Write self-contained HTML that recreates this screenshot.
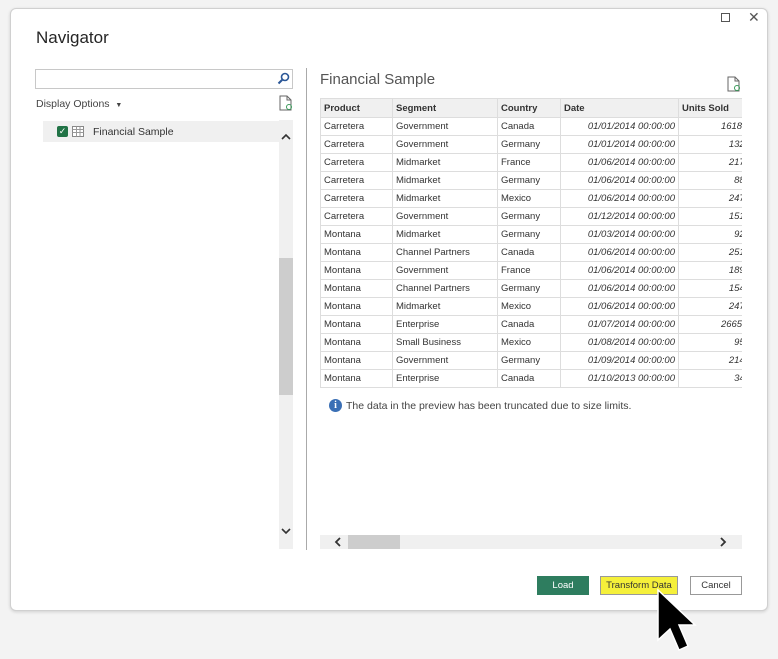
<!DOCTYPE html><html><head><style>
*{margin:0;padding:0;box-sizing:border-box}
body{width:778px;height:659px;background:#f3f3f3;font-family:"Liberation Sans",sans-serif;position:relative;overflow:hidden}
.dlg{position:absolute;left:10px;top:8px;width:758px;height:603px;background:#fff;border:1px solid #d0d0d0;border-radius:6px;box-shadow:0 1px 3px rgba(0,0,0,.15)}
.a{position:absolute}
table{border-collapse:collapse;font-size:9.5px;color:#333;table-layout:fixed}
td,th{border:1px solid #ddd;height:18px;padding:0 3px;white-space:nowrap;overflow:hidden;text-align:left}
th{background:#f0f0f0;font-weight:bold;height:19px}
td.d{font-style:italic;text-align:right}
td.u{font-style:italic;text-align:right;padding-right:0}
.btn{position:absolute;top:576px;height:19px;font-size:9.5px;text-align:center;line-height:17px;border:1px solid #999}
.chev{position:absolute;font-size:13px;color:#333;font-weight:bold}
</style></head><body>
<div class="dlg"></div>
<div class="a" style="left:36px;top:28px;font-size:17px;color:#252525">Navigator</div>
<div class="a" style="left:721px;top:13px;width:9px;height:9px;border:1px solid #555"></div>
<div class="a" style="left:748px;top:9px;font-size:14px;color:#555">✕</div>
<div class="a" style="left:35px;top:69px;width:258px;height:20px;border:1px solid #c8c8c8"></div>
<svg class="a" style="left:277px;top:72px" width="13" height="13"><circle cx="8" cy="5" r="3.5" fill="none" stroke="#2b5797" stroke-width="1.6"/><line x1="5.5" y1="7.5" x2="1.5" y2="11.5" stroke="#2b5797" stroke-width="2"/></svg>
<div class="a" style="left:36px;top:98px;font-size:10.5px;color:#444">Display Options&nbsp;&nbsp;<span style="font-size:7px">▼</span></div>
<svg class="a" style="left:279px;top:95px" width="14" height="16"><path d="M1 1h7l4 4v10H1z" fill="#fff" stroke="#666"/><path d="M8 1v4h4" fill="none" stroke="#666"/><circle cx="10" cy="12" r="2.5" fill="none" stroke="#3a9a5a"/></svg>
<div class="a" style="left:43px;top:121px;width:236px;height:21px;background:#f0f0f0"></div>
<div class="a" style="left:57px;top:126px;width:11px;height:11px;background:#217346;border-radius:2px;color:#fff;font-size:9px;line-height:11px;text-align:center">✓</div>
<svg class="a" style="left:72px;top:126px" width="12" height="11"><rect x=".5" y=".5" width="11" height="10" fill="#fff" stroke="#888"/><path d="M.5 3.5h11M.5 6.5h11M4.5 .5v10M8 .5v10" stroke="#999"/></svg>
<div class="a" style="left:93px;top:126px;font-size:10.5px;color:#333">Financial Sample</div>
<div class="a" style="left:279px;top:120px;width:14px;height:429px;background:#f0f0f0"></div>
<div class="a" style="left:279px;top:258px;width:14px;height:137px;background:#cdcdcd"></div>
<svg class="a" style="left:281px;top:133px" width="10" height="7"><path d="M1 6L5 2L9 6" fill="none" stroke="#333" stroke-width="1.6"/></svg>
<svg class="a" style="left:281px;top:528px" width="10" height="7"><path d="M1 1L5 5L9 1" fill="none" stroke="#333" stroke-width="1.6"/></svg>
<div class="a" style="left:306px;top:68px;width:1px;height:482px;background:#aaa"></div>
<div class="a" style="left:320px;top:71px;font-size:15px;color:#555">Financial Sample</div>
<svg class="a" style="left:727px;top:76px" width="14" height="16"><path d="M1 1h7l4 4v10H1z" fill="#fff" stroke="#666"/><path d="M8 1v4h4" fill="none" stroke="#666"/><circle cx="10" cy="12" r="2.5" fill="none" stroke="#3a9a5a"/></svg>
<div class="a" style="left:320px;top:98px;width:422px;height:292px;overflow:hidden">
<table style="width:430px"><colgroup><col style="width:72px"><col style="width:105px"><col style="width:63px"><col style="width:118px"><col style="width:72px"></colgroup>
<tr><th>Product</th><th>Segment</th><th>Country</th><th>Date</th><th>Units Sold</th></tr>
<tr><td>Carretera</td><td>Government</td><td>Canada</td><td class="d">01/01/2014 00:00:00</td><td class="u">1618.5</td></tr>
<tr><td>Carretera</td><td>Government</td><td>Germany</td><td class="d">01/01/2014 00:00:00</td><td class="u">1321</td></tr>
<tr><td>Carretera</td><td>Midmarket</td><td>France</td><td class="d">01/06/2014 00:00:00</td><td class="u">2178</td></tr>
<tr><td>Carretera</td><td>Midmarket</td><td>Germany</td><td class="d">01/06/2014 00:00:00</td><td class="u">888</td></tr>
<tr><td>Carretera</td><td>Midmarket</td><td>Mexico</td><td class="d">01/06/2014 00:00:00</td><td class="u">2470</td></tr>
<tr><td>Carretera</td><td>Government</td><td>Germany</td><td class="d">01/12/2014 00:00:00</td><td class="u">1513</td></tr>
<tr><td>Montana</td><td>Midmarket</td><td>Germany</td><td class="d">01/03/2014 00:00:00</td><td class="u">921</td></tr>
<tr><td>Montana</td><td>Channel Partners</td><td>Canada</td><td class="d">01/06/2014 00:00:00</td><td class="u">2518</td></tr>
<tr><td>Montana</td><td>Government</td><td>France</td><td class="d">01/06/2014 00:00:00</td><td class="u">1899</td></tr>
<tr><td>Montana</td><td>Channel Partners</td><td>Germany</td><td class="d">01/06/2014 00:00:00</td><td class="u">1545</td></tr>
<tr><td>Montana</td><td>Midmarket</td><td>Mexico</td><td class="d">01/06/2014 00:00:00</td><td class="u">2470</td></tr>
<tr><td>Montana</td><td>Enterprise</td><td>Canada</td><td class="d">01/07/2014 00:00:00</td><td class="u">2665.5</td></tr>
<tr><td>Montana</td><td>Small Business</td><td>Mexico</td><td class="d">01/08/2014 00:00:00</td><td class="u">958</td></tr>
<tr><td>Montana</td><td>Government</td><td>Germany</td><td class="d">01/09/2014 00:00:00</td><td class="u">2146</td></tr>
<tr><td>Montana</td><td>Enterprise</td><td>Canada</td><td class="d">01/10/2013 00:00:00</td><td class="u">345</td></tr>
</table></div>
<div class="a" style="left:329px;top:399px;width:13px;height:13px;border-radius:50%;background:#3a6fb5;color:#fff;font-size:10px;font-weight:bold;text-align:center;line-height:13px;font-family:'Liberation Serif',serif">i</div>
<div class="a" style="left:346px;top:400px;font-size:10.5px;color:#444">The data in the preview has been truncated due to size limits.</div>
<div class="a" style="left:320px;top:535px;width:422px;height:14px;background:#f0f0f0"></div>
<div class="a" style="left:348px;top:535px;width:52px;height:14px;background:#cdcdcd"></div>
<svg class="a" style="left:334px;top:537px" width="8" height="10"><path d="M6 1L2 5L6 9" fill="none" stroke="#333" stroke-width="1.8"/></svg>
<svg class="a" style="left:719px;top:537px" width="8" height="10"><path d="M2 1L6 5L2 9" fill="none" stroke="#333" stroke-width="1.8"/></svg>
<div class="btn" style="left:537px;width:52px;background:#2e7d5f;color:#fff;border-color:#2e7d5f">Load</div>
<div class="btn" style="left:600px;width:78px;background:#f5f03a;color:#333">Transform Data</div>
<div class="btn" style="left:690px;width:52px;background:#fff;color:#333">Cancel</div>
<svg class="a" style="left:655px;top:588px" width="44" height="66"><path d="M3 2L3 52L15 41L24 62L33 58L24 37L40 37Z" fill="#000" stroke="#fff" stroke-width="1.5"/></svg>
</body></html>
